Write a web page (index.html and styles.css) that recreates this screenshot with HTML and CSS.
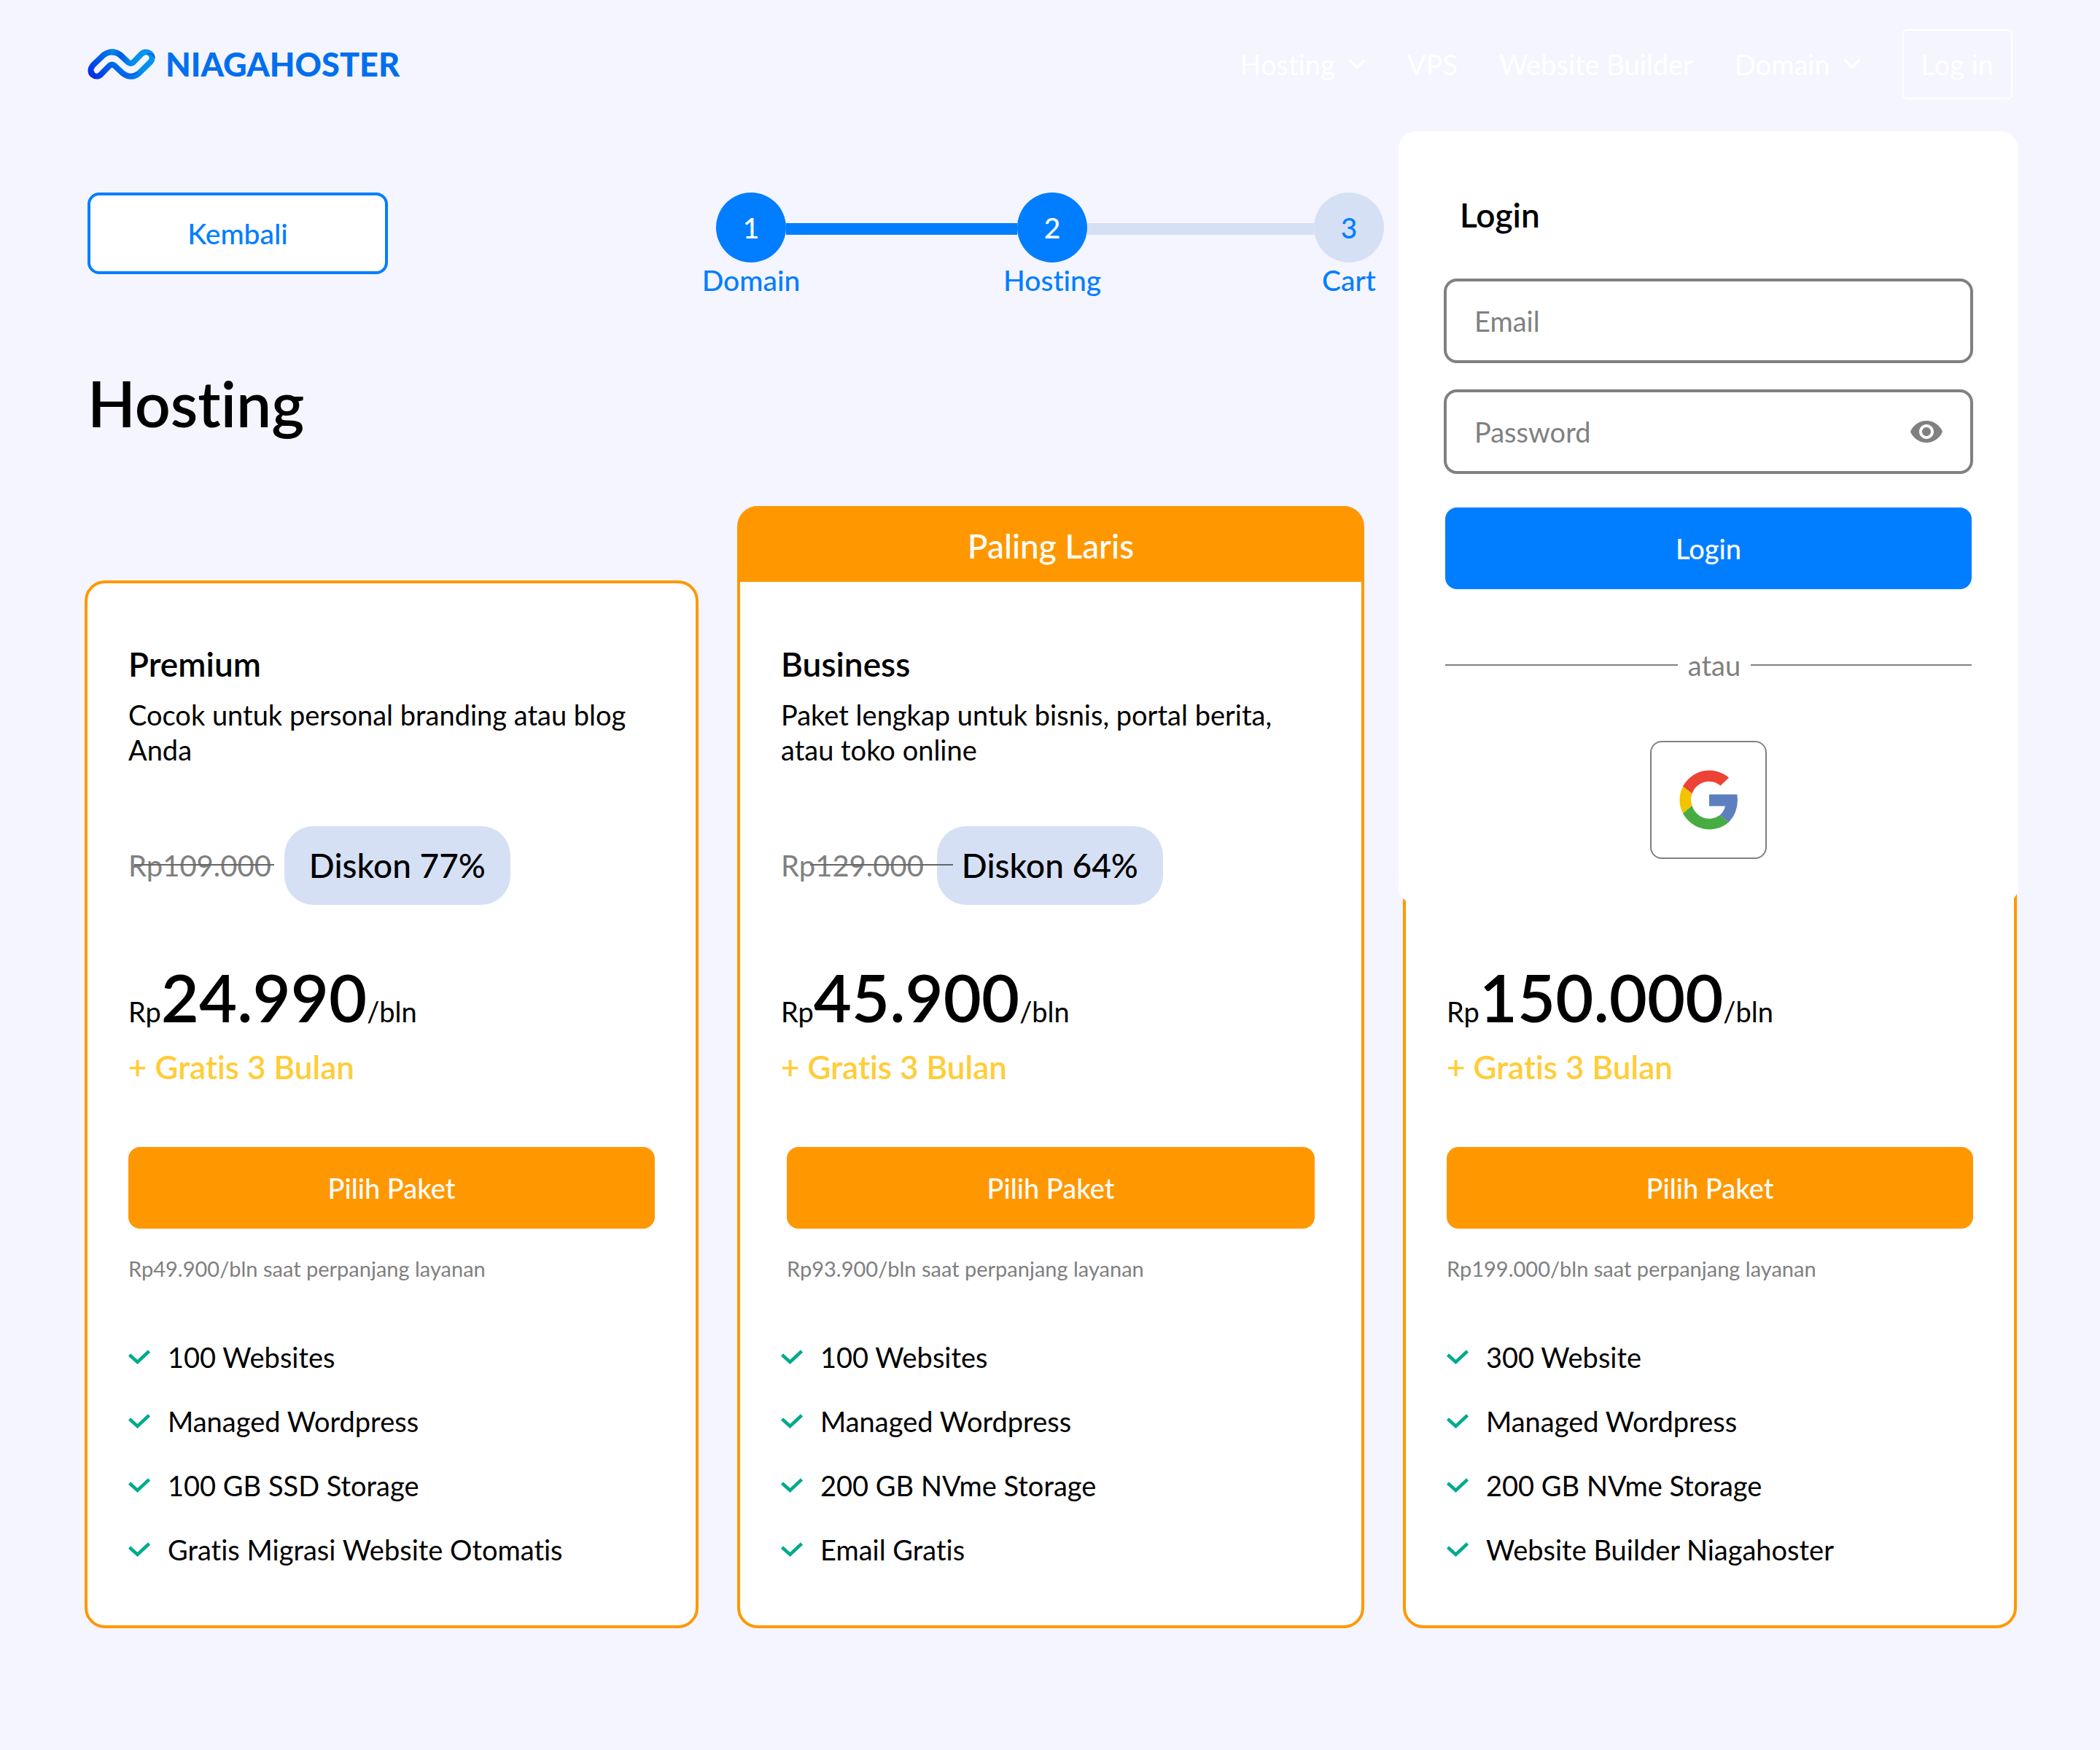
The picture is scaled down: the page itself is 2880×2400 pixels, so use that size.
FILE: index.html
```html
<!DOCTYPE html>
<html lang="id">
<head>
<meta charset="utf-8">
<meta name="viewport" content="width=device-width, initial-scale=1">
<title>Niagahoster - Hosting</title>
<link rel="stylesheet" href="styles.css">
</head>
<body>
<svg width="0" height="0" class="sprite" aria-hidden="true">
  <symbol id="check" viewBox="0 0 30 20"><path d="M1.500 7 12.500 17 28.500 2" fill="none" stroke="#00aa8d" stroke-width="4.500"/></symbol>
  <symbol id="chevron" viewBox="0 0 24 16"><path d="M2 2.500 12 12.500 22 2.500" fill="none" stroke="currentColor" stroke-width="4"/></symbol>
</svg>

<header class="header">
  <a class="logo" href="#">
    <svg class="logo-mark" viewBox="62 81 280 127" aria-hidden="true">
      <defs>
        <linearGradient id="ribbon" gradientUnits="userSpaceOnUse" x1="80" y1="200" x2="210" y2="80">
          <stop offset="0" stop-color="#0030e8"/><stop offset=".5" stop-color="#0060ea"/><stop offset="1" stop-color="#0092ee"/>
        </linearGradient>
        <linearGradient id="fold" gradientUnits="userSpaceOnUse" x1="150" y1="95" x2="240" y2="140">
          <stop offset="0" stop-color="#0098f0"/><stop offset=".5" stop-color="#0058e0"/><stop offset="1" stop-color="#0090ee"/>
        </linearGradient>
      </defs>
      <path d="M84 149 130 105Q163 82 197 106L229 136Q241 146 252 136L284 103C308 80 345 108 322 136L274 183Q241 208 207 182L174 151Q163 142 152 151L116 188C97 207 57 183 84 149Z" fill="none" stroke="url(#ribbon)" stroke-width="24" stroke-linejoin="round"/>
      <path d="M160 94Q182 94 197 106L229 136" fill="none" stroke="url(#fold)" stroke-width="24"/>
      <path d="M88 172Q84 190 94 205" fill="none" stroke="#0018b8" stroke-width="3"/>
      <path d="M310 102Q334 98 340 118" fill="none" stroke="#0050d8" stroke-width="4"/>
      <path d="M206 187Q238 196 268 178" fill="none" stroke="#0050e0" stroke-width="4"/>
    </svg>
    <span class="logo-text">NIAGAHOSTER</span>
  </a>
  <nav class="nav">
    <a href="#">Hosting <svg class="chevron"><use href="#chevron"/></svg></a>
    <a href="#">VPS</a>
    <a href="#">Website Builder</a>
    <a href="#">Domain <svg class="chevron"><use href="#chevron"/></svg></a>
    <button class="nav-login" type="button">Log in</button>
  </nav>

  <form class="login">
    <h2 class="login-title">Login</h2>
    <div class="field"><input class="input" type="email" placeholder="Email" aria-label="Email"></div>
    <div class="field">
      <input class="input" type="password" placeholder="Password" aria-label="Password">
      <button class="reveal" type="button" aria-label="Password">
        <svg viewBox="1 4.500 22 15"><path fill="#808080" d="M12 4.500C7 4.500 2.730 7.610 1 12c1.730 4.390 6 7.500 11 7.500s9.270-3.110 11-7.500c-1.730-4.390-6-7.500-11-7.500zM12 17c-2.760 0-5-2.240-5-5s2.240-5 5-5 5 2.240 5 5-2.240 5-5 5zm0-8c-1.660 0-3 1.340-3 3s1.340 3 3 3 3-1.340 3-3-1.340-3-3-3z"/></svg>
      </button>
    </div>
    <button class="button button-blue" type="submit">Login</button>
    <div class="divider">atau</div>
    <button class="google" type="button" aria-label="Google">
      <svg viewBox="0 0 80 82">
        <path fill="#ec4335" d="M5 22.500A41 41 0 0 1 68 10.500L56.500 21.500A24.500 24.500 0 0 0 17.500 32.500Z"/>
        <path fill="#f3c300" d="M5 22.500 17.500 32.500A26 26 0 0 0 17.500 49L5 59.500A42 42 0 0 1 5 22.500Z"/>
        <path fill="#46ac43" d="M5 59.500 17.500 49A24.500 24.500 0 0 0 55.500 62L68 71.500A41 41 0 0 1 5 59.500Z"/>
        <path fill="#5c7fbe" d="M41 33.500H79.300Q82.500 56 68 71.500L55.500 62Q61.500 57 63 49.500H41Z"/>
      </svg>
    </button>
  </form>
</header>

<main class="main">
  <div class="toolbar">
    <button class="back" type="button">Kembali</button>
    <ol class="stepper">
      <li class="step done"><span class="step-dot">1</span><span>Domain</span></li>
      <li class="step-line done" role="presentation"></li>
      <li class="step done"><span class="step-dot">2</span><span>Hosting</span></li>
      <li class="step-line" role="presentation"></li>
      <li class="step"><span class="step-dot">3</span><span>Cart</span></li>
    </ol>
  </div>

  <h1 class="title">Hosting</h1>

  <section class="plans">
    <article class="plan">
      <h2 class="plan-name">Premium</h2>
      <p class="plan-text">Cocok untuk personal branding atau blog Anda</p>
      <div class="deal"><del class="old">Rp109.000</del><span class="badge">Diskon 77%</span></div>
      <p class="price">Rp<strong>24.990</strong>/bln</p>
      <p class="bonus">+ Gratis 3 Bulan</p>
      <button class="button button-orange" type="button">Pilih Paket</button>
      <p class="renewal">Rp49.900/bln saat perpanjang layanan</p>
      <ul class="features">
        <li><svg class="check"><use href="#check"/></svg>100 Websites</li>
        <li><svg class="check"><use href="#check"/></svg>Managed Wordpress</li>
        <li><svg class="check"><use href="#check"/></svg>100 GB SSD Storage</li>
        <li><svg class="check"><use href="#check"/></svg>Gratis Migrasi Website Otomatis</li>
      </ul>
    </article>

    <article class="plan featured">
      <p class="ribbon">Paling Laris</p>
      <h2 class="plan-name">Business</h2>
      <p class="plan-text">Paket lengkap untuk bisnis, portal berita, atau toko online</p>
      <div class="deal"><del class="old">Rp129.000</del><span class="badge">Diskon 64%</span></div>
      <p class="price">Rp<strong>45.900</strong>/bln</p>
      <p class="bonus">+ Gratis 3 Bulan</p>
      <button class="button button-orange" type="button">Pilih Paket</button>
      <p class="renewal">Rp93.900/bln saat perpanjang layanan</p>
      <ul class="features">
        <li><svg class="check"><use href="#check"/></svg>100 Websites</li>
        <li><svg class="check"><use href="#check"/></svg>Managed Wordpress</li>
        <li><svg class="check"><use href="#check"/></svg>200 GB NVme Storage</li>
        <li><svg class="check"><use href="#check"/></svg>Email Gratis</li>
      </ul>
    </article>

    <article class="plan">
      <p class="price">Rp<strong>150.000</strong>/bln</p>
      <p class="bonus">+ Gratis 3 Bulan</p>
      <button class="button button-orange" type="button">Pilih Paket</button>
      <p class="renewal">Rp199.000/bln saat perpanjang layanan</p>
      <ul class="features">
        <li><svg class="check"><use href="#check"/></svg>300 Website</li>
        <li><svg class="check"><use href="#check"/></svg>Managed Wordpress</li>
        <li><svg class="check"><use href="#check"/></svg>200 GB NVme Storage</li>
        <li><svg class="check"><use href="#check"/></svg>Website Builder Niagahoster</li>
      </ul>
    </article>
  </section>
</main>
</body>
</html>
```
FILE: styles.css
```css
:root {
  --blue: #007eff;
  --pale: #d6e0f5;
  --orange: #ff9800;
  --gray: #808080;
}

* { box-sizing: border-box; }

body {
  margin: 0;
  background: #f5f5ff;
  color: #000;
  font: 400 38px/48px Lato, "Open Sans", sans-serif;
  font-variant-ligatures: none;
}

h1, h2, p, ol, ul { margin: 0; padding: 0; list-style: none; }
h1, h2 { font-weight: 600; }
button, input { font: inherit; font-variant-ligatures: none; }
button { cursor: pointer; }
svg { display: block; }
.sprite { position: absolute; }

/* Header */
.header {
  position: relative;
  display: flex;
  align-items: center;
  justify-content: space-between;
  padding: 40px 120px;
}

.logo {
  display: flex;
  align-items: center;
  gap: 14px;
  color: #006fee;
  text-decoration: none;
}
.logo-mark { width: 93px; height: 42px; }
.logo-text { font-size: 45px; font-weight: 900; }

.nav { display: flex; align-items: center; gap: 57px; }
.nav a {
  display: flex;
  align-items: center;
  gap: 18px;
  color: #fff;
  text-decoration: none;
}
.chevron { width: 24px; height: 16px; }
.nav-login {
  height: 96px;
  padding: 0 24px;
  border: 2px solid #fff;
  border-radius: 6px;
  background: none;
  color: #fff;
}

/* Login panel, opened below the navigation */
.login {
  position: absolute;
  z-index: 2;
  top: 180px;
  right: 112px;
  display: flex;
  flex-direction: column;
  width: 850px;
  padding: 86px 62px 62px;
  border-radius: 24px;
  background: #fff;
}
.login-title { margin: 0 0 58px 22px; font-size: 46px; line-height: 58px; }
.field { position: relative; margin-bottom: 36px; }
.input {
  width: 100%;
  height: 116px;
  padding: 0 38px;
  border: 4px solid var(--gray);
  border-radius: 18px;
  background: #fff;
  color: #000;
}
.input::placeholder { color: var(--gray); opacity: 1; }
.reveal {
  position: absolute;
  top: 43px;
  right: 42px;
  width: 44px;
  padding: 0;
  border: 0;
  background: none;
}

.button {
  height: 112px;
  border: 0;
  border-radius: 16px;
  color: #fff;
  font-weight: 500;
}
.button-blue { margin: 10px 2px 0; background: var(--blue); }
.button-orange { background: var(--orange); }

.divider {
  display: flex;
  align-items: center;
  gap: 14px;
  margin: 80px 2px;
  color: var(--gray);
}
.divider::before, .divider::after {
  content: "";
  flex: 20;
  height: 2px;
  background: var(--gray);
}
.divider::after { flex: 19; }
.google {
  display: flex;
  align-items: center;
  justify-content: center;
  align-self: center;
  width: 160px;
  height: 162px;
  border: 2px solid var(--gray);
  border-radius: 16px;
  background: #fff;
}
.google svg { flex: none; width: 80px; height: 82px; }

/* Toolbar */
.main { padding: 88px 114px 168px 116px; }
.toolbar {
  display: grid;
  grid-template-columns: 1fr minmax(0, 916px) 1fr;
  align-items: start;
  padding: 0 6px 0 4px;
  font-size: 39px;
}
.back {
  width: 412px;
  height: 112px;
  border: 4px solid var(--blue);
  border-radius: 16px;
  background: #fff;
  color: var(--blue);
  font-weight: 500;
}
.stepper { display: flex; color: var(--blue); font-weight: 500; }
.step {
  display: flex;
  flex-direction: column;
  align-items: center;
  width: 96px;
  white-space: nowrap;
}
.step-dot {
  display: grid;
  place-items: center;
  width: 96px;
  height: 96px;
  border-radius: 50%;
  background: var(--pale);
}
.step.done .step-dot { background: var(--blue); color: #fff; }
.step-line { flex: 50; height: 16px; margin-top: 42px; background: var(--pale); }
.step-line.done { flex: 51; background: var(--blue); }

.title { margin: 92px 4px 88px; font-size: 86px; line-height: 106px; }

/* Plans */
.plans {
  display: grid;
  grid-template-columns: 842fr 860fr 842fr;
  gap: 53px;
}
.plan {
  display: flex;
  flex-direction: column;
  justify-content: flex-end;
  margin-top: 102px;
  padding: 82px 56px 80px;
  border: 4px solid var(--orange);
  border-radius: 28px;
  background: #fff;
}
.plan.featured { margin-top: 0; padding-top: 0; }
.ribbon {
  margin: -4px -56px 84px;
  padding: 26px 0 20px;
  border-radius: 24px 24px 0 0;
  background: var(--orange);
  color: #fff;
  font-size: 46px;
  font-weight: 500;
  line-height: 58px;
  text-align: center;
}
.plan-name { font-size: 46px; line-height: 58px; }
.plan-text { margin-top: 16px; }
.deal { display: flex; align-items: center; gap: 18px; margin-top: 81px; }
.old {
  position: relative;
  color: var(--gray);
  font-size: 40px;
  text-decoration: none;
}
.old::after {
  content: "";
  position: absolute;
  top: 22px;
  right: -4px;
  left: 8px;
  height: 2px;
  background: #666;
}
.featured .old::after { right: -40px; left: 40px; }
.badge {
  padding: 25px 34px;
  border-radius: 40px;
  background: var(--pale);
  font-size: 46px;
  font-weight: 500;
  line-height: 58px;
}
.price { margin-top: 73px; }
.price strong { font-size: 90px; font-weight: 600; line-height: 106px; }
.bonus {
  margin: 14px 0 81px;
  color: #ffcd38;
  font-size: 44px;
  font-weight: 600;
  line-height: 58px;
}
.renewal {
  margin: 36px 0 78px;
  color: var(--gray);
  font-size: 29px;
  line-height: 38px;
}
.featured .button, .featured .renewal { margin-right: 8px; margin-left: 8px; }
.features { display: grid; gap: 40px; }
.features li { display: flex; align-items: center; gap: 24px; }
.check { flex: none; width: 30px; height: 20px; }
```
